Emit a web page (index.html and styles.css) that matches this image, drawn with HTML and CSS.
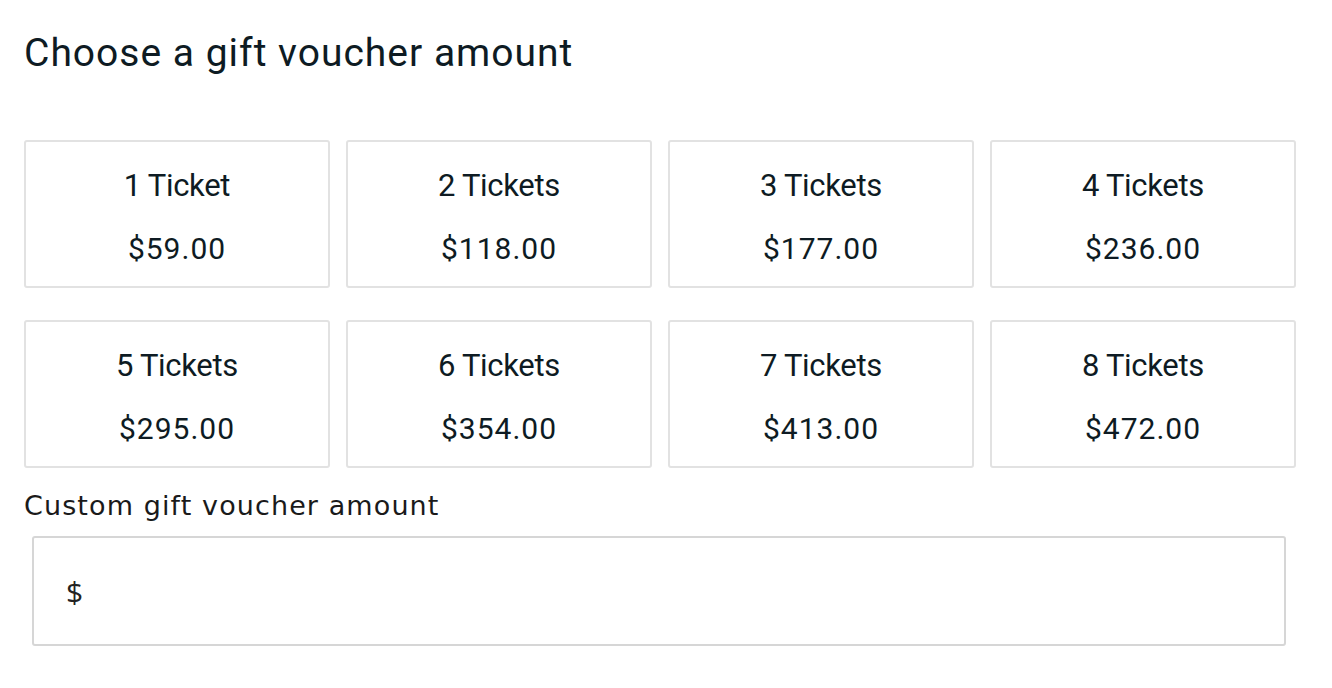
FILE: index.html
```html
<!DOCTYPE html>
<html lang="en">
<head>
<meta charset="utf-8">
<title>Gift voucher</title>
<link rel="stylesheet" href="styles.css">
</head>
<body>
<main class="page">
  <h1 class="title">Choose a gift voucher amount</h1>
  <div class="grid">
    <div class="card"><div class="card-name">1 Ticket</div><div class="card-price">$59.00</div></div>
    <div class="card"><div class="card-name">2 Tickets</div><div class="card-price">$118.00</div></div>
    <div class="card"><div class="card-name">3 Tickets</div><div class="card-price">$177.00</div></div>
    <div class="card"><div class="card-name">4 Tickets</div><div class="card-price">$236.00</div></div>
    <div class="card"><div class="card-name">5 Tickets</div><div class="card-price">$295.00</div></div>
    <div class="card"><div class="card-name">6 Tickets</div><div class="card-price">$354.00</div></div>
    <div class="card"><div class="card-name">7 Tickets</div><div class="card-price">$413.00</div></div>
    <div class="card"><div class="card-name">8 Tickets</div><div class="card-price">$472.00</div></div>
  </div>
  <label class="label" for="custom">Custom gift voucher amount</label>
  <div class="input-box">
    <span class="currency">$</span>
    <input class="input" id="custom" type="text">
  </div>
</main>
</body>
</html>
```
FILE: styles.css
```css
html, body {
  margin: 0;
  padding: 0;
  background: #ffffff;
}
.page {
  padding: 0 36px 0 24px;
  color: #0e1b23;
  font-family: Roboto, "Noto Sans", sans-serif;
}
.title {
  margin: 0;
  padding-top: 30px;
  height: 140px;
  box-sizing: border-box;
  font-size: 39px;
  font-weight: 400;
  line-height: 46px;
  letter-spacing: 1px;
}
.grid {
  display: grid;
  grid-template-columns: repeat(4, 306px);
  column-gap: 16px;
  row-gap: 32px;
}
.card {
  height: 148px;
  box-sizing: border-box;
  border: 2px solid #e2e2e2;
  border-radius: 3px;
  display: flex;
  flex-direction: column;
  align-items: center;
  padding-top: 24px;
}
.card-name {
  font-size: 31px;
  line-height: 40px;
  letter-spacing: -0.3px;
}
.card-price {
  margin-top: 25px;
  font-size: 30px;
  line-height: 36px;
  letter-spacing: 1px;
}
.label {
  display: block;
  margin-top: 22px;
  font-family: "DejaVu Sans", sans-serif;
  font-size: 27px;
  line-height: 32px;
  letter-spacing: 1.1px;
  color: #1a1a1a;
}
.input-box {
  margin: 14px 10px 0 8px;
  height: 110px;
  box-sizing: border-box;
  border: 2px solid #d6d6d6;
  border-radius: 3px;
  display: flex;
  align-items: center;
  padding-left: 32px;
}
.currency {
  font-family: "Open Sans", sans-serif;
  font-size: 30px;
  color: #222;
}
.input {
  flex: 1;
  border: none;
  outline: none;
  height: 100%;
  background: transparent;
  font-size: 24px;
}
```
